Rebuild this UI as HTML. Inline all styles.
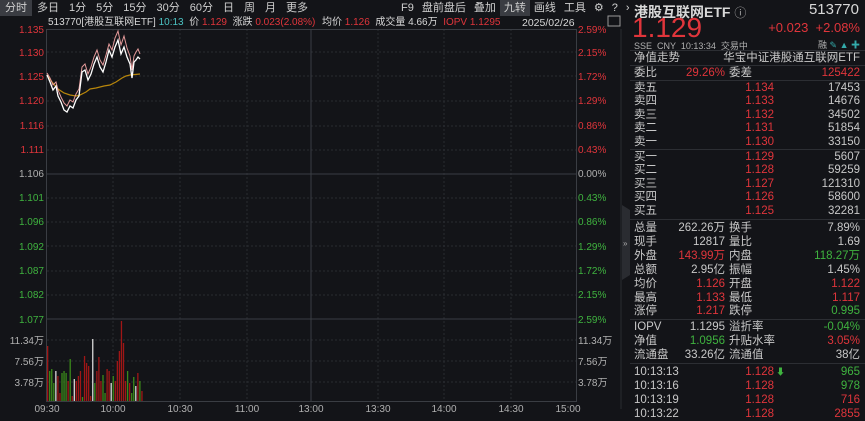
<!DOCTYPE html><html><head><meta charset="utf-8"><style>
*{margin:0;padding:0;box-sizing:border-box}
body{width:865px;height:419px;background:#131418;font-family:"Liberation Sans","Noto Sans CJK SC",sans-serif;color:#c8c8c8;font-size:11px;position:relative;overflow:hidden}
.a{position:absolute;white-space:nowrap}
.r{color:#e0353b}.g{color:#3fb33f}.w{color:#d8d8d8}.gy{color:#b0b0b0}
.tb span{display:inline-block;padding:0 5px;height:16px;line-height:16px}
.tb2 span{display:inline-block;padding:0 4px;height:16px;line-height:16px}
.row{position:absolute;left:634px;width:226px;height:13px;line-height:13px;font-size:11.5px}
.row .l{position:absolute;left:0}.row .m{position:absolute;right:135px}.row .n{position:absolute;left:95px}.row .v{position:absolute;right:0}
.sep{position:absolute;left:630px;width:235px;height:1px;background:#2c2e33}
.hd{position:absolute;top:16px;font-size:10.5px;line-height:14px;white-space:nowrap}
</style></head><body>
<div class="a tb" style="left:0;top:0;color:#cfcfcf;font-size:11px"><span style="background:#3a3c42">分时</span><span>多日</span><span>1分</span><span>5分</span><span>15分</span><span>30分</span><span>60分</span><span>日</span><span>周</span><span>月</span><span>更多</span></div>
<div class="a tb2" style="left:397px;top:0;color:#cfcfcf"><span>F9</span><span>盘前盘后</span><span>叠加</span><span style="background:#3a3c42">九转</span><span>画线</span><span>工具</span><span>⚙</span><span>?</span><span>›</span></div>
<div class="hd" style="left:48px;font-size:10px"><span class="w">513770[港股互联网ETF]</span> <span style="color:#4cc3c3">10:13</span> &nbsp;<span class="w">价</span> <span class="r">1.129</span> &nbsp;<span class="w">涨跌</span> <span class="r">0.023(2.08%)</span></div>
<div class="hd" style="left:322px;font-size:10px"><span class="w">均价</span> <span class="r">1.126</span> &nbsp;<span class="w">成交量</span> <span class="w">4.66万</span> &nbsp;<span class="r">IOPV</span> <span class="r">1.1295</span></div>
<div class="hd w" style="left:522px">2025/02/26</div>
<svg class="a" style="left:0;top:0" width="630" height="419">
<g stroke="#2a2c31" stroke-dasharray="2,2" fill="none">
<line x1="113" y1="29" x2="113" y2="401"/><line x1="180" y1="29" x2="180" y2="401"/><line x1="247" y1="29" x2="247" y2="401"/><line x1="378" y1="29" x2="378" y2="401"/><line x1="444" y1="29" x2="444" y2="401"/><line x1="511" y1="29" x2="511" y2="401"/>
<line x1="47" y1="52" x2="576" y2="52"/><line x1="47" y1="76" x2="576" y2="76"/><line x1="47" y1="101" x2="576" y2="101"/><line x1="47" y1="126" x2="576" y2="126"/><line x1="47" y1="150" x2="576" y2="150"/><line x1="47" y1="198" x2="576" y2="198"/><line x1="47" y1="222" x2="576" y2="222"/><line x1="47" y1="246" x2="576" y2="246"/><line x1="47" y1="271" x2="576" y2="271"/><line x1="47" y1="295" x2="576" y2="295"/>
<line x1="47" y1="340" x2="576" y2="340"/><line x1="47" y1="361" x2="576" y2="361"/><line x1="47" y1="382" x2="576" y2="382"/>
</g>
<g stroke="#3a3d43" fill="none"><rect x="46.5" y="29.5" width="530" height="372"/><line x1="47" y1="174" x2="576" y2="174"/><line x1="47" y1="319" x2="576" y2="319"/><line x1="311" y1="29" x2="311" y2="401"/></g>
<polyline fill="none" stroke="#b8860b" stroke-width="1.2" points="47,75 52,82 58,89 64,93 70,95 76,96 80,95 86,92 90,89 96,88 104,86 110,85 116,82 122,78 126,76 130,75 140,74"/>
<polyline fill="none" stroke="#e49a9a" stroke-width="1" points="47,73 50,78 53,85 56,82 58,90 61,97 64,103 67,106 70,100 73,102 76,94 79,89 82,67 85,64 88,74 91,67 94,57 97,50 100,60 103,65 106,55 109,44 112,50 115,38 118,31 121,45 124,36 127,48 130,56 132,70 134,56 136,52 138,49 140,54"/>
<polyline fill="none" stroke="#ffffff" stroke-width="1.3" points="47,75 50,82 53,90 56,86 58,96 61,102 64,110 67,112 70,106 73,108 76,100 79,96 82,72 85,70 88,80 91,74 94,64 97,57 100,67 103,72 106,62 109,50 112,57 115,47 118,40 121,54 124,47 127,57 130,64 132,78 134,62 136,60 138,57 140,59"/>
<g id="vol"></g>
<g font-size="10" font-family="Liberation Sans" text-anchor="end">
<text x="44" y="33" fill="#e0353b">1.135</text><text x="44" y="56" fill="#e0353b">1.130</text><text x="44" y="80" fill="#e0353b">1.125</text><text x="44" y="104" fill="#e0353b">1.120</text><text x="44" y="129" fill="#e0353b">1.116</text><text x="44" y="153" fill="#e0353b">1.111</text><text x="44" y="177" fill="#b0b0b0">1.106</text><text x="44" y="201" fill="#3fb33f">1.101</text><text x="44" y="225" fill="#3fb33f">1.096</text><text x="44" y="250" fill="#3fb33f">1.092</text><text x="44" y="274" fill="#3fb33f">1.087</text><text x="44" y="298" fill="#3fb33f">1.082</text><text x="44" y="323" fill="#3fb33f">1.077</text>
<text x="44" y="344" fill="#b0b0b0">11.34万</text><text x="44" y="365" fill="#b0b0b0">7.56万</text><text x="44" y="386" fill="#b0b0b0">3.78万</text>
</g>
<g font-size="10" font-family="Liberation Sans">
<text x="578" y="33" fill="#e0353b">2.59%</text><text x="578" y="56" fill="#e0353b">2.15%</text><text x="578" y="80" fill="#e0353b">1.72%</text><text x="578" y="104" fill="#e0353b">1.29%</text><text x="578" y="129" fill="#e0353b">0.86%</text><text x="578" y="153" fill="#e0353b">0.43%</text><text x="578" y="177" fill="#b0b0b0">0.00%</text><text x="578" y="201" fill="#3fb33f">0.43%</text><text x="578" y="225" fill="#3fb33f">0.86%</text><text x="578" y="250" fill="#3fb33f">1.29%</text><text x="578" y="274" fill="#3fb33f">1.72%</text><text x="578" y="298" fill="#3fb33f">2.15%</text><text x="578" y="323" fill="#3fb33f">2.59%</text>
<text x="578" y="344" fill="#b0b0b0">11.34万</text><text x="578" y="365" fill="#b0b0b0">7.56万</text><text x="578" y="386" fill="#b0b0b0">3.78万</text>
</g>
<g font-size="10" fill="#b0b0b0" text-anchor="middle" font-family="Liberation Sans">
<text x="47" y="412">09:30</text><text x="113" y="412">10:00</text><text x="180" y="412">10:30</text><text x="247" y="412">11:00</text><text x="311" y="412">13:00</text><text x="378" y="412">13:30</text><text x="444" y="412">14:00</text><text x="511" y="412">14:30</text><text x="568" y="412">15:00</text>
</g>
<rect x="620" y="29" width="2" height="380" fill="#1e2024"/>
<path d="M622 205 L630 210 L630 275 L622 280Z" fill="#2a2c31"/><text x="623" y="246" font-size="8" fill="#aaa">»</text>
<rect x="608" y="16" width="12" height="10" fill="none" stroke="#999"/>
</svg>
<script>
var h=[55,30,32,18,30,25,8,28,30,28,20,42,5,22,20,25,30,4,45,38,35,5,62,18,30,44,20,26,8,32,30,18,25,20,40,50,80,58,20,30,18,8,24,15,28,20,10];
var c="rgggwrrgggrgrwrrrgrrrrwgrrrggrrwgrrrrrrgrggwrgrgr";
var s="";for(var i=0;i<h.length;i++){var x=47+i*2.05;var col=c[i]=="r"?"#a01616":c[i]=="g"?"#3a8a1a":"#d8d8d8";s+='<rect x="'+x+'" y="'+(401-h[i])+'" width="1.3" height="'+h[i]+'" fill="'+col+'"/>';}
document.getElementById("vol").innerHTML=s;
</script>
<div class="a w" style="left:634px;top:2px;font-size:14px;font-weight:bold">港股互联网ETF <span style="font-weight:normal;font-size:12px;color:#aaa">ⓘ</span></div>
<div class="a w" style="right:6px;top:1px;font-size:15px">513770</div>
<div class="a r" style="left:632px;top:15px;font-size:28px;line-height:26px">1.129</div>
<div class="a r" style="right:5px;top:20px;font-size:13px">+0.023 &nbsp;+2.08%</div>
<div class="a gy" style="left:634px;top:39px;font-size:9px">SSE &nbsp;CNY &nbsp;10:13:34 &nbsp;交易中</div>
<div class="a gy" style="right:5px;top:38px;font-size:9px">融 <span style="color:#3aa">✎ ▲ ✚</span></div>
<div class="sep" style="top:50px"></div>
<div class="row" style="top:52px"><span class="l">净值走势</span><span class="v">华宝中证港股通互联网ETF</span></div>
<div class="sep" style="top:65px"></div>
<div class="row" style="top:67px"><span class="l">委比</span><span class="m r">29.26%</span><span class="n">委差</span><span class="v r">125422</span></div>
<div class="sep" style="top:80px"></div>
<div class="row" style="top:82px"><span class="l">卖五</span><span class="m r" style="right:86px">1.134</span><span class="v">17453</span></div>
<div class="row" style="top:95px"><span class="l">卖四</span><span class="m r" style="right:86px">1.133</span><span class="v">14676</span></div>
<div class="row" style="top:109px"><span class="l">卖三</span><span class="m r" style="right:86px">1.132</span><span class="v">34502</span></div>
<div class="row" style="top:122px"><span class="l">卖二</span><span class="m r" style="right:86px">1.131</span><span class="v">51854</span></div>
<div class="row" style="top:136px"><span class="l">卖一</span><span class="m r" style="right:86px">1.130</span><span class="v">33150</span></div>
<div class="sep" style="top:149px"></div>
<div class="row" style="top:151px"><span class="l">买一</span><span class="m r" style="right:86px">1.129</span><span class="v">5607</span></div>
<div class="row" style="top:164px"><span class="l">买二</span><span class="m r" style="right:86px">1.128</span><span class="v">59259</span></div>
<div class="row" style="top:178px"><span class="l">买三</span><span class="m r" style="right:86px">1.127</span><span class="v">121310</span></div>
<div class="row" style="top:191px"><span class="l">买四</span><span class="m r" style="right:86px">1.126</span><span class="v">58600</span></div>
<div class="row" style="top:205px"><span class="l">买五</span><span class="m r" style="right:86px">1.125</span><span class="v">32281</span></div>
<div class="sep" style="top:219px"></div>
<div class="row" style="top:222px"><span class="l">总量</span><span class="m">262.26万</span><span class="n">换手</span><span class="v">7.89%</span></div>
<div class="row" style="top:236px"><span class="l">现手</span><span class="m">12817</span><span class="n">量比</span><span class="v">1.69</span></div>
<div class="row" style="top:250px"><span class="l">外盘</span><span class="m r">143.99万</span><span class="n">内盘</span><span class="v g">118.27万</span></div>
<div class="row" style="top:264px"><span class="l">总额</span><span class="m">2.95亿</span><span class="n">振幅</span><span class="v">1.45%</span></div>
<div class="row" style="top:278px"><span class="l">均价</span><span class="m r">1.126</span><span class="n">开盘</span><span class="v r">1.122</span></div>
<div class="row" style="top:292px"><span class="l">最高</span><span class="m r">1.133</span><span class="n">最低</span><span class="v r">1.117</span></div>
<div class="row" style="top:305px"><span class="l">涨停</span><span class="m r">1.217</span><span class="n">跌停</span><span class="v g">0.995</span></div>
<div class="sep" style="top:319px"></div>
<div class="row" style="top:321px"><span class="l">IOPV</span><span class="m">1.1295</span><span class="n">溢折率</span><span class="v g">-0.04%</span></div>
<div class="row" style="top:335px"><span class="l">净值</span><span class="m g">1.0956</span><span class="n">升贴水率</span><span class="v r">3.05%</span></div>
<div class="row" style="top:349px"><span class="l">流通盘</span><span class="m">33.26亿</span><span class="n">流通值</span><span class="v">38亿</span></div>
<div class="sep" style="top:363px"></div>
<div class="row" style="top:366px"><span class="l">10:13:13</span><span class="m r" style="right:86px">1.128</span><span class="g a" style="left:142px;font-size:9px">⬇</span><span class="v g">965</span></div>
<div class="row" style="top:380px"><span class="l">10:13:16</span><span class="m r" style="right:86px">1.128</span><span class="v g">978</span></div>
<div class="row" style="top:394px"><span class="l">10:13:19</span><span class="m r" style="right:86px">1.128</span><span class="v r">716</span></div>
<div class="row" style="top:408px"><span class="l">10:13:22</span><span class="m r" style="right:86px">1.128</span><span class="v r">2855</span></div>
</body></html>
